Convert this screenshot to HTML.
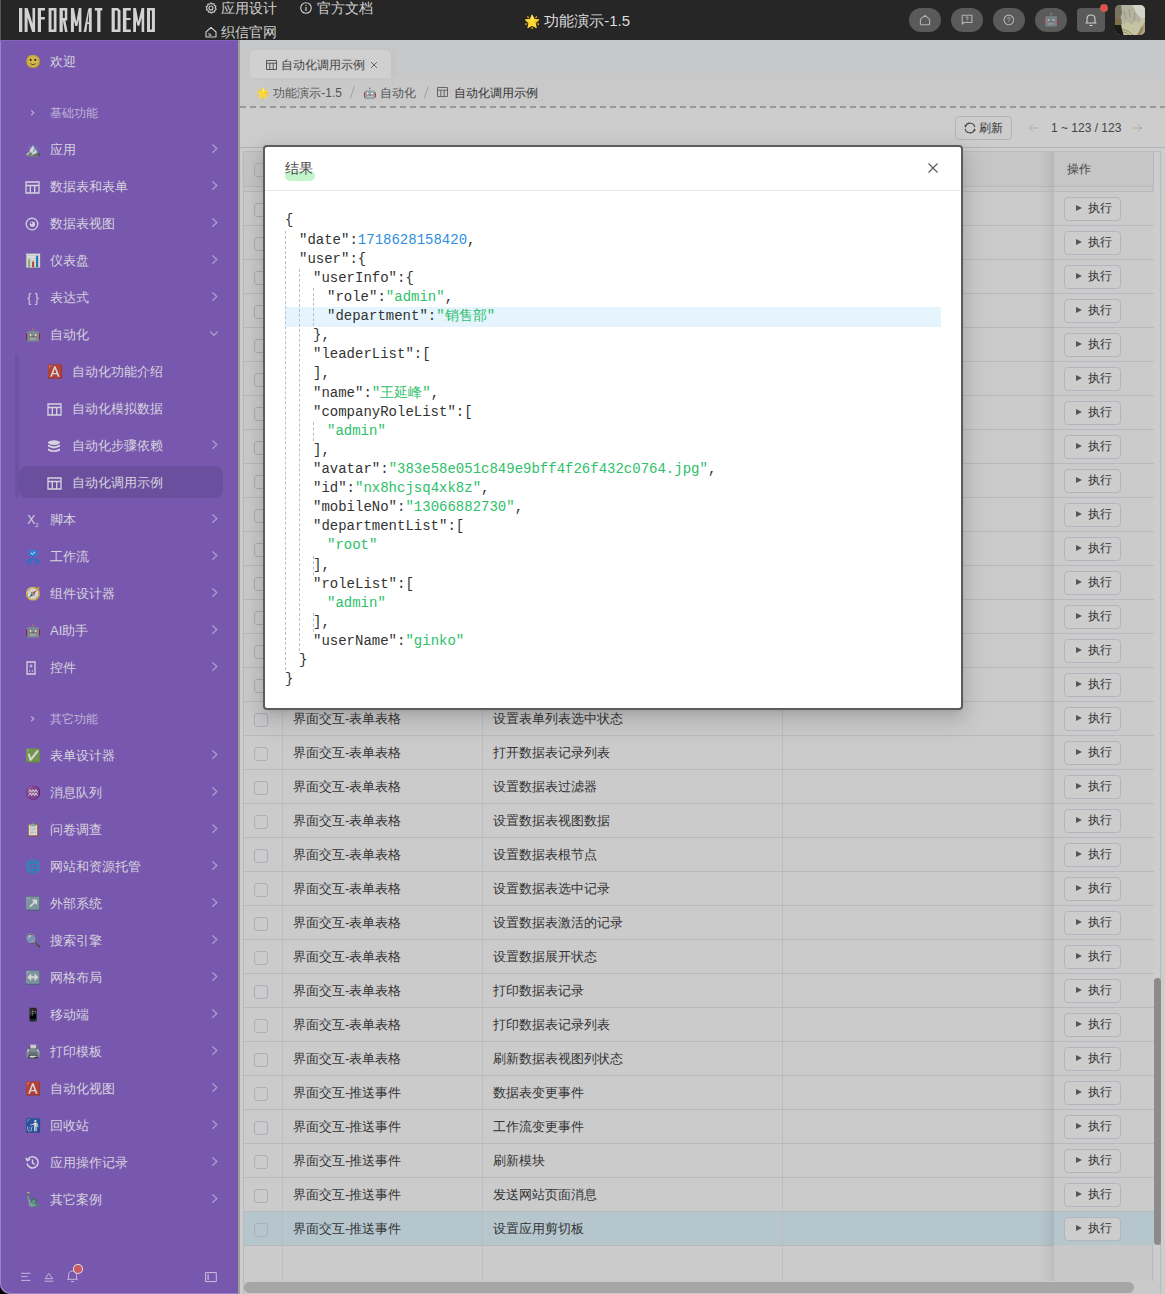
<!DOCTYPE html><html><head><meta charset="utf-8"><style>
*{box-sizing:border-box}
html,body{margin:0;padding:0}
body{width:1165px;height:1294px;overflow:hidden;position:relative;font-family:"Liberation Sans",sans-serif;background:#cdcdcd;color:#333}
.a{position:absolute}
#hdr{position:absolute;left:0;top:0;width:1165px;height:40px;background:#262626;color:#cfcfcf}
.nav{position:absolute;font-size:14px;line-height:16px;white-space:nowrap}
.pill{position:absolute;top:8px;width:32px;height:24px;border-radius:12px;background:#5a5a5a}
#side{position:absolute;left:0;top:40px;width:238px;height:1254px;background:#7758ae;border-bottom-left-radius:10px;box-shadow:inset 1px -1px 0 #9a82c8;color:#d6d3de;overflow:hidden}
#sidebd{position:absolute;left:238px;top:40px;width:2px;height:1254px;background:#9e9e9e}
.mi{position:absolute;left:0;width:238px;height:20px;font-size:13px;line-height:20px;white-space:nowrap}
.mi .ic{position:absolute;top:0;width:16px;height:20px;text-align:center;font-size:13px;line-height:20px}
.mi .tx{position:absolute;top:0}
.mi .ch{position:absolute;left:210.5px;top:4px}.mi svg{display:block}.emo{filter:saturate(.75) brightness(.85)}
.sec{color:#c2b6da}
#main{position:absolute;left:240px;top:40px;width:925px;height:1254px;background:#cdcdcd;overflow:hidden}
.row{position:absolute;left:243px;width:910px;height:34px;border-bottom:1px solid #b9b9bd;font-size:13px;line-height:33px;color:#333}
.cb{position:absolute;left:11px;top:9px;width:16px;height:16px;border:1px solid #b3b3bb;border-radius:3px;background:#cbcbcb}
.c1{position:absolute;left:40px;top:0;width:200px;height:34px;border-left:1px solid #bdbdc1;padding-left:10px}
.c2{position:absolute;left:240px;top:0;width:300px;height:34px;border-left:1px solid #bdbdc1;padding-left:10px}
.c3{position:absolute;left:540px;top:0;width:271px;height:34px;border-left:1px solid #bdbdc1}
.ops{position:absolute;left:811px;top:0;width:99px;height:34px;background:#c9c9c9}
.btn{position:absolute;left:11px;top:6px;width:56px;height:23px;border:1px solid #b5b5bd;border-radius:4px;background:#cbcbcb;font-size:12px;line-height:21px;color:#333;padding-left:10px;white-space:nowrap}
.tri{display:inline-block;width:0;height:0;border-left:6px solid #444;border-top:4px solid transparent;border-bottom:4px solid transparent;margin-right:5px;vertical-align:0px}
#modal{position:absolute;left:263px;top:145px;width:700px;height:565px;background:#fff;border:2px solid #5c5c5c;border-radius:4px;box-shadow:0 6px 16px 0 rgba(0,0,0,.12),0 3px 6px -4px rgba(0,0,0,.16),0 9px 28px 8px rgba(0,0,0,.07)}
.js{font-family:"Liberation Mono",monospace;font-size:14px;line-height:19.12px;color:#333;white-space:pre}
.k{color:#333}.s{color:#2ec06a}.n{color:#2e8ee0}
</style></head><body>
<div id="hdr">
<div class="a" style="left:0;top:0;width:1px;height:40px;background:#565656"></div>
<svg class="a" style="left:0;top:0" width="200" height="40"><path d="M19 8h3.3v24H19Z M24.6 8h3v24h-3Z M24.6 8h3L35.1 32h-3Z M32.5 8h2.6v24h-2.6Z M37.8 8h3.2v24h-3.2Z M37.8 8h7.2v2.6h-7.2Z M37.8 17h7v2.4h-7Z M48.6 8h7.9v24h-7.9Z M51.5 10.6v18.8h2.3V10.6Z M59.5 8h3.3v24h-3.3Z M59.5 8h7.8v2.6h-7.8Z M64.8 8h2.5v12.5h-2.5Z M59.5 18h7.8v2.5h-7.8Z M62.8 20h2.5L67.6 32H65Z M70.9 8h3v24h-3Z M78.8 8h2.6v24h-2.6Z M70.9 8h3L76.3 22 78.8 8h2.6L77.3 26h-2Z M83.6 32L88.4 8 89 10.5 86.3 32Z M88.9 8h2.8v24h-2.8Z M85.6 22.3h3.6v1.7h-3.6Z M94.8 8h7.5v2.4h-7.5Z M97.2 8h3.3v24h-3.3Z M111.6 8H118L120.5 10.5V32h-8.9Z M114.8 10.6V29.4h2.8V11.2L117 10.6Z M122.9 8h3.5v24h-3.5Z M122.9 8h7.9v2.5h-7.9Z M122.9 18h7.6v2.1h-7.6Z M122.9 29.5h7.9V32h-7.9Z M133.2 8h2.8v24h-2.8Z M141.6 8h2.6v24h-2.6Z M133.2 8H136L138.4 21.5 141.6 8h2.6L139.4 25.8h-2Z M147 8h7.9v24H147Z M150 10.6v18.8h1.9V10.6Z" fill="#d2d2d2" fill-rule="nonzero"/></svg>
<div class="nav" style="left:205px;top:0px;padding-left:16px"><svg width="12" height="12" viewBox="0 0 12 12" style="position:absolute;left:0;top:2px"><circle cx="6" cy="6" r="2" fill="none" stroke="#cfcfcf" stroke-width="1.1"/><path d="M6 .8L7.2 2 8.9 1.7 9.3 3.4 10.9 4.1 10.3 5.8 11.2 7.2 9.8 8.2 9.6 10 7.9 9.9 6.6 11.2 5.4 10 3.6 10.3 3.1 8.6 1.4 7.8 2 6.2 1.1 4.8 2.7 3.9 2.9 2.1 4.6 2.2Z" fill="none" stroke="#cfcfcf" stroke-width="1.1" stroke-linejoin="round"/></svg>应用设计</div>
<div class="nav" style="left:300px;top:0px;padding-left:17px"><svg width="12" height="12" viewBox="0 0 12 12" style="position:absolute;left:0;top:2px"><circle cx="6" cy="6" r="5.3" fill="none" stroke="#cfcfcf" stroke-width="1.1"/><path d="M6 5V9 M6 3V3.9" stroke="#cfcfcf" stroke-width="1.2"/></svg>官方文档</div>
<div class="nav" style="left:205px;top:24px;padding-left:16px"><svg width="12" height="12" viewBox="0 0 12 12" style="position:absolute;left:0;top:2px"><path d="M1 6L6 1.3 11 6V11H1Z" fill="none" stroke="#cfcfcf" stroke-width="1.1" stroke-linejoin="round"/><path d="M3.5 7.5Q6 7.5 6 10 M3.5 9Q4.5 9 4.5 10" fill="none" stroke="#cfcfcf" stroke-width="1"/></svg>织信官网</div>
<div class="nav" style="left:524px;top:12px;font-size:15px;line-height:17px;color:#dedede"><span style="font-size:13px">🌟</span> 功能演示-1.5</div>
<div class="pill" style="left:909px"></div>
<div class="pill" style="left:951px"></div>
<div class="pill" style="left:993px"></div>
<div class="pill" style="left:1035px"></div>
<svg class="a" style="left:919px;top:13px" width="12" height="13" viewBox="0 0 12 13"><path d="M1.4 6.3L6 2.3 10.6 6.3V11.2Q10.6 11.8 10 11.8H2Q1.4 11.8 1.4 11.2Z" fill="none" stroke="#b3b3b3" stroke-width="1.1" stroke-linejoin="round"/></svg>
<svg class="a" style="left:961px;top:14px" width="12" height="12" viewBox="0 0 12 12"><path d="M1.2 1.3H10.9V8.5H2.9L1.2 10.2Z" fill="none" stroke="#b3b3b3" stroke-width="1.1" stroke-linejoin="round"/><path d="M4.9 4.1Q5 2.9 6.1 2.9Q7.2 2.9 7.2 3.9Q7.2 4.6 6.1 5.1V5.9 M6.1 6.6V7.4" fill="none" stroke="#b3b3b3" stroke-width="0.9"/></svg>
<svg class="a" style="left:1003px;top:14px" width="12" height="12" viewBox="0 0 12 12"><circle cx="5.8" cy="5.9" r="4.8" fill="none" stroke="#b3b3b3" stroke-width="1.1"/><path d="M4.6 4.9Q4.7 3.6 5.8 3.6Q7 3.6 7 4.7Q7 5.4 5.9 5.9V6.7 M5.9 7.4V8.2" fill="none" stroke="#b3b3b3" stroke-width="0.9"/></svg>
<div class="a" style="left:1043px;top:11px;width:16px;height:18px;font-size:13px;line-height:18px;text-align:center;opacity:.55">🤖</div>
<div class="a" style="left:1077px;top:8px;width:28px;height:24px;border-radius:4px;background:#5a5a5a"></div>
<svg class="a" style="left:1085px;top:13px" width="12" height="14" viewBox="0 0 12 14"><path d="M2 10V6Q2 2 6 2Q10 2 10 6V10H11H1Z" fill="none" stroke="#d0d0d0" stroke-width="1.1" stroke-linejoin="round"/><path d="M4.5 12.5H7.5" stroke="#d0d0d0" stroke-width="1.1"/></svg>
<div class="a" style="left:1100px;top:4px;width:8px;height:8px;border-radius:4px;background:#d9534f"></div>
<svg class="a" style="left:1115px;top:5px" width="30" height="30" viewBox="0 0 30 30"><defs><clipPath id="avc"><rect x="0" y="0" width="30" height="30" rx="5"/></clipPath><filter id="avb" x="-20%" y="-20%" width="140%" height="140%"><feGaussianBlur stdDeviation="0.7"/></filter></defs><g clip-path="url(#avc)"><rect width="30" height="30" fill="#c6c3a2"/><g filter="url(#avb)"><path d="M-2 -2H32V15L27 13 24 18 20 16 17 20 13 17 9 19 6 15 -2 16Z" fill="#b3b3a0"/><path d="M16 -2H32V12L27 14 22 9Z" fill="#d3d3cb"/><path d="M-2 -2H6L7 8 5 14H-2Z" fill="#77755e"/><path d="M-2 13H6L7 19 5 21H-2Z" fill="#7d6d4c"/><path d="M-2 20H6L9 32H-2Z" fill="#1f1d12"/><path d="M22 32L30 16 32 16V32Z" fill="#a99e84"/><path d="M21 32L27 21 28 23 24 32Z" fill="#8f845a"/><path d="M7 24Q13 25 19 31 M8 27Q12 27 15 31" stroke="#8d8a64" stroke-width="0.9" fill="none"/><path d="M9 6L11 14 M14 4L15 12 M20 8L19 16" stroke="#8d8f78" stroke-width="0.8" fill="none"/></g></g></svg>
</div>
<div class="a" style="left:0;top:1270px;width:20px;height:24px;background:#000"></div>
<div id="side">
<div class="a" style="left:0;top:0;width:238px;height:1px;background:#8462bf"></div>
<div class="a" style="left:15px;top:315px;width:4px;height:143px;background:#6e51a3"></div>
<div class="a" style="left:19px;top:426px;width:204px;height:32px;border-radius:8px;background:#6b4f9f"></div>
<div class="mi" style="top:12px">
<span class="ic emo" style="left:25px">🙂</span>
<span class="tx" style="left:50px">欢迎</span>
</div>
<div class="mi sec" style="top:63px"><svg class="a" style="left:30px;top:6px" width="6" height="8" viewBox="0 0 6 8"><path d="M1.2 1.4L3.8 3.8 1.2 6.2" fill="none" stroke="#c4b8dc" stroke-width="1.1"/></svg><span class="tx" style="left:50px;font-size:12px">基础功能</span></div>
<div class="mi" style="top:100px">
<span class="ic emo" style="left:25px">🏔️</span>
<span class="tx" style="left:50px">应用</span>
<span class="ch"><svg width="8" height="10" viewBox="0 0 8 10"><path d="M1.4 .6L5.8 4.6 1.4 8.7" fill="none" stroke="#ab9dcc" stroke-width="1.3"/></svg></span>
</div>
<div class="mi" style="top:137px">
<span class="ic" style="left:25px"><svg width="15" height="13" viewBox="0 0 15 13" style="margin-top:4px"><path d="M1 1H14V12H1Z M1 4.5H14 M5.3 4.5V12 M9.7 4.5V12" fill="none" stroke="#d6d3de" stroke-width="1.3"/></svg></span>
<span class="tx" style="left:50px">数据表和表单</span>
<span class="ch"><svg width="8" height="10" viewBox="0 0 8 10"><path d="M1.4 .6L5.8 4.6 1.4 8.7" fill="none" stroke="#ab9dcc" stroke-width="1.3"/></svg></span>
</div>
<div class="mi" style="top:174px">
<span class="ic" style="left:25px"><svg width="14" height="14" viewBox="0 0 14 14" style="margin-top:3px"><circle cx="7" cy="7" r="5.8" fill="none" stroke="#d6d3de" stroke-width="1.3"/><circle cx="7.4" cy="7.2" r="2.6" fill="#d6d3de"/><circle cx="6.5" cy="6.3" r="1" fill="#7758ae"/></svg></span>
<span class="tx" style="left:50px">数据表视图</span>
<span class="ch"><svg width="8" height="10" viewBox="0 0 8 10"><path d="M1.4 .6L5.8 4.6 1.4 8.7" fill="none" stroke="#ab9dcc" stroke-width="1.3"/></svg></span>
</div>
<div class="mi" style="top:211px">
<span class="ic emo" style="left:25px">📊</span>
<span class="tx" style="left:50px">仪表盘</span>
<span class="ch"><svg width="8" height="10" viewBox="0 0 8 10"><path d="M1.4 .6L5.8 4.6 1.4 8.7" fill="none" stroke="#ab9dcc" stroke-width="1.3"/></svg></span>
</div>
<div class="mi" style="top:248px">
<span class="ic" style="left:25px;font-size:12px">{ }</span>
<span class="tx" style="left:50px">表达式</span>
<span class="ch"><svg width="8" height="10" viewBox="0 0 8 10"><path d="M1.4 .6L5.8 4.6 1.4 8.7" fill="none" stroke="#ab9dcc" stroke-width="1.3"/></svg></span>
</div>
<div class="mi" style="top:285px">
<span class="ic emo" style="left:25px">🤖</span>
<span class="tx" style="left:50px">自动化</span>
<span class="ch" style="left:208px;top:4px"><svg width="12" height="9" viewBox="0 0 12 9"><path d="M2.1 2.4L5.9 6.3 9.8 2.4" fill="none" stroke="#ab9dcc" stroke-width="1.3"/></svg></span>
</div>
<div class="mi" style="top:322px">
<span class="ic emo" style="left:47px">🅰️</span>
<span class="tx" style="left:72px">自动化功能介绍</span>
</div>
<div class="mi" style="top:359px">
<span class="ic" style="left:47px"><svg width="15" height="13" viewBox="0 0 15 13" style="margin-top:4px"><path d="M1 1H14V12H1Z M1 4.5H14 M5.3 4.5V12 M9.7 4.5V12" fill="none" stroke="#d6d3de" stroke-width="1.3"/></svg></span>
<span class="tx" style="left:72px">自动化模拟数据</span>
</div>
<div class="mi" style="top:396px">
<span class="ic" style="left:47px"><svg width="14" height="13" viewBox="0 0 14 13" style="margin-top:4px"><ellipse cx="7" cy="2.6" rx="6" ry="2.3" fill="#d6d3de"/><path d="M1 4.6Q7 8.2 13 4.6V6.6Q7 10.2 1 6.6Z M1 8.6Q7 12.2 13 8.6V10.4Q7 13.8 1 10.4Z" fill="#d6d3de"/></svg></span>
<span class="tx" style="left:72px">自动化步骤依赖</span>
<span class="ch"><svg width="8" height="10" viewBox="0 0 8 10"><path d="M1.4 .6L5.8 4.6 1.4 8.7" fill="none" stroke="#ab9dcc" stroke-width="1.3"/></svg></span>
</div>
<div class="mi" style="top:433px">
<span class="ic" style="left:47px"><svg width="15" height="13" viewBox="0 0 15 13" style="margin-top:4px"><path d="M1 1H14V12H1Z M1 4.5H14 M5.3 4.5V12 M9.7 4.5V12" fill="none" stroke="#d6d3de" stroke-width="1.3"/></svg></span>
<span class="tx" style="left:72px">自动化调用示例</span>
</div>
<div class="mi" style="top:470px">
<span class="ic" style="left:25px;font-size:12px">X<sub style="font-size:6px">2</sub></span>
<span class="tx" style="left:50px">脚本</span>
<span class="ch"><svg width="8" height="10" viewBox="0 0 8 10"><path d="M1.4 .6L5.8 4.6 1.4 8.7" fill="none" stroke="#ab9dcc" stroke-width="1.3"/></svg></span>
</div>
<div class="mi" style="top:507px">
<span class="ic" style="left:25px"><svg width="16" height="16" viewBox="0 0 16 16" style="margin-top:2px"><rect x="4" y="1" width="8" height="6" fill="#2b7fd4"/><path d="M5.8 4L7.4 5.3 10 2.8" stroke="#e8f0ff" stroke-width="1" fill="none"/><path d="M8 7V9M4 12V10H12V12" stroke="#2b6fc4" stroke-width="1.2" fill="none"/><circle cx="4" cy="13" r="2.2" fill="none" stroke="#2b6fc4" stroke-width="1.2"/><circle cx="12" cy="13" r="2.2" fill="none" stroke="#2b6fc4" stroke-width="1.2"/></svg></span>
<span class="tx" style="left:50px">工作流</span>
<span class="ch"><svg width="8" height="10" viewBox="0 0 8 10"><path d="M1.4 .6L5.8 4.6 1.4 8.7" fill="none" stroke="#ab9dcc" stroke-width="1.3"/></svg></span>
</div>
<div class="mi" style="top:544px">
<span class="ic emo" style="left:25px">🧭</span>
<span class="tx" style="left:50px">组件设计器</span>
<span class="ch"><svg width="8" height="10" viewBox="0 0 8 10"><path d="M1.4 .6L5.8 4.6 1.4 8.7" fill="none" stroke="#ab9dcc" stroke-width="1.3"/></svg></span>
</div>
<div class="mi" style="top:581px">
<span class="ic emo" style="left:25px">🤖</span>
<span class="tx" style="left:50px">AI助手</span>
<span class="ch"><svg width="8" height="10" viewBox="0 0 8 10"><path d="M1.4 .6L5.8 4.6 1.4 8.7" fill="none" stroke="#ab9dcc" stroke-width="1.3"/></svg></span>
</div>
<div class="mi" style="top:618px">
<span class="ic" style="left:25px"><svg width="12" height="14" viewBox="0 0 12 14" style="margin-top:3px"><path d="M2 1H10V13H2Z" fill="none" stroke="#d6d3de" stroke-width="1.3"/><path d="M6 3.5V6.5 M4.5 5H7.5" stroke="#d6d3de" stroke-width="1"/><circle cx="4.6" cy="10" r=".7" fill="#d6d3de"/><circle cx="7.4" cy="10" r=".7" fill="#d6d3de"/></svg></span>
<span class="tx" style="left:50px">控件</span>
<span class="ch"><svg width="8" height="10" viewBox="0 0 8 10"><path d="M1.4 .6L5.8 4.6 1.4 8.7" fill="none" stroke="#ab9dcc" stroke-width="1.3"/></svg></span>
</div>
<div class="mi sec" style="top:669px"><svg class="a" style="left:30px;top:6px" width="6" height="8" viewBox="0 0 6 8"><path d="M1.2 1.4L3.8 3.8 1.2 6.2" fill="none" stroke="#c4b8dc" stroke-width="1.1"/></svg><span class="tx" style="left:50px;font-size:12px">其它功能</span></div>
<div class="mi" style="top:706px">
<span class="ic emo" style="left:25px">✅</span>
<span class="tx" style="left:50px">表单设计器</span>
<span class="ch"><svg width="8" height="10" viewBox="0 0 8 10"><path d="M1.4 .6L5.8 4.6 1.4 8.7" fill="none" stroke="#ab9dcc" stroke-width="1.3"/></svg></span>
</div>
<div class="mi" style="top:743px">
<span class="ic emo" style="left:25px">♒</span>
<span class="tx" style="left:50px">消息队列</span>
<span class="ch"><svg width="8" height="10" viewBox="0 0 8 10"><path d="M1.4 .6L5.8 4.6 1.4 8.7" fill="none" stroke="#ab9dcc" stroke-width="1.3"/></svg></span>
</div>
<div class="mi" style="top:780px">
<span class="ic emo" style="left:25px">📋</span>
<span class="tx" style="left:50px">问卷调查</span>
<span class="ch"><svg width="8" height="10" viewBox="0 0 8 10"><path d="M1.4 .6L5.8 4.6 1.4 8.7" fill="none" stroke="#ab9dcc" stroke-width="1.3"/></svg></span>
</div>
<div class="mi" style="top:817px">
<span class="ic emo" style="left:25px">🌐</span>
<span class="tx" style="left:50px">网站和资源托管</span>
<span class="ch"><svg width="8" height="10" viewBox="0 0 8 10"><path d="M1.4 .6L5.8 4.6 1.4 8.7" fill="none" stroke="#ab9dcc" stroke-width="1.3"/></svg></span>
</div>
<div class="mi" style="top:854px">
<span class="ic emo" style="left:25px">↗️</span>
<span class="tx" style="left:50px">外部系统</span>
<span class="ch"><svg width="8" height="10" viewBox="0 0 8 10"><path d="M1.4 .6L5.8 4.6 1.4 8.7" fill="none" stroke="#ab9dcc" stroke-width="1.3"/></svg></span>
</div>
<div class="mi" style="top:891px">
<span class="ic emo" style="left:25px">🔍</span>
<span class="tx" style="left:50px">搜索引擎</span>
<span class="ch"><svg width="8" height="10" viewBox="0 0 8 10"><path d="M1.4 .6L5.8 4.6 1.4 8.7" fill="none" stroke="#ab9dcc" stroke-width="1.3"/></svg></span>
</div>
<div class="mi" style="top:928px">
<span class="ic emo" style="left:25px">↔️</span>
<span class="tx" style="left:50px">网格布局</span>
<span class="ch"><svg width="8" height="10" viewBox="0 0 8 10"><path d="M1.4 .6L5.8 4.6 1.4 8.7" fill="none" stroke="#ab9dcc" stroke-width="1.3"/></svg></span>
</div>
<div class="mi" style="top:965px">
<span class="ic emo" style="left:25px">📱</span>
<span class="tx" style="left:50px">移动端</span>
<span class="ch"><svg width="8" height="10" viewBox="0 0 8 10"><path d="M1.4 .6L5.8 4.6 1.4 8.7" fill="none" stroke="#ab9dcc" stroke-width="1.3"/></svg></span>
</div>
<div class="mi" style="top:1002px">
<span class="ic emo" style="left:25px">🖨️</span>
<span class="tx" style="left:50px">打印模板</span>
<span class="ch"><svg width="8" height="10" viewBox="0 0 8 10"><path d="M1.4 .6L5.8 4.6 1.4 8.7" fill="none" stroke="#ab9dcc" stroke-width="1.3"/></svg></span>
</div>
<div class="mi" style="top:1039px">
<span class="ic emo" style="left:25px">🅰️</span>
<span class="tx" style="left:50px">自动化视图</span>
<span class="ch"><svg width="8" height="10" viewBox="0 0 8 10"><path d="M1.4 .6L5.8 4.6 1.4 8.7" fill="none" stroke="#ab9dcc" stroke-width="1.3"/></svg></span>
</div>
<div class="mi" style="top:1076px">
<span class="ic emo" style="left:25px">🚮</span>
<span class="tx" style="left:50px">回收站</span>
<span class="ch"><svg width="8" height="10" viewBox="0 0 8 10"><path d="M1.4 .6L5.8 4.6 1.4 8.7" fill="none" stroke="#ab9dcc" stroke-width="1.3"/></svg></span>
</div>
<div class="mi" style="top:1113px">
<span class="ic" style="left:25px"><svg width="15" height="15" viewBox="0 0 15 15" style="margin-top:2px"><path d="M2.3 5.2A5.6 5.6 0 1 1 2 8.5" fill="none" stroke="#d6d3de" stroke-width="1.5"/><path d="M.8 2.8L2.3 5.8 5.2 4.2" fill="none" stroke="#d6d3de" stroke-width="1.4"/><path d="M7.5 4.5V7.8L9.8 9.5" fill="none" stroke="#d6d3de" stroke-width="1.4"/></svg></span>
<span class="tx" style="left:50px">应用操作记录</span>
<span class="ch"><svg width="8" height="10" viewBox="0 0 8 10"><path d="M1.4 .6L5.8 4.6 1.4 8.7" fill="none" stroke="#ab9dcc" stroke-width="1.3"/></svg></span>
</div>
<div class="mi" style="top:1150px">
<span class="ic emo" style="left:25px">🗽</span>
<span class="tx" style="left:50px">其它案例</span>
<span class="ch"><svg width="8" height="10" viewBox="0 0 8 10"><path d="M1.4 .6L5.8 4.6 1.4 8.7" fill="none" stroke="#ab9dcc" stroke-width="1.3"/></svg></span>
</div>
<svg class="a" style="left:20px;top:1228px" width="200" height="16" viewBox="0 0 200 16">
<path d="M1.1 5.3H10.5 M1.1 8.6H7.7 M1.1 12.4H10.5" stroke="#c9c0dc" stroke-width="0.9"/>
<path d="M28.9 5.4L32.6 10.7H25.2Z M24.5 13.2H33.5" fill="none" stroke="#c9c0dc" stroke-width="0.9" stroke-linejoin="round"/>
<path d="M48.5 11.3V7.5Q48.5 3 52.5 3Q56.5 3 56.5 7.5V11.3 M47.2 11.3H57.8 M51 13.6H54" fill="none" stroke="#c9c0dc" stroke-width="0.9"/>
<path d="M185.6 4.6H196.3V13.6H185.6Z" fill="none" stroke="#c9c0dc" stroke-width="1"/><path d="M188.1 6.2V11.9" stroke="#c9c0dc" stroke-width="1.2"/>
</svg>
<div class="a" style="left:74px;top:1225px;width:8px;height:8px;border-radius:4px;background:#c95c5c;box-shadow:0 0 0 1px #e8e0e8"></div>
</div>
<div id="sidebd"></div>
<div id="main">
<div class="a" style="left:0;top:0;width:925px;height:38px;background:#c7c8ca"></div>
<div class="a" style="left:0;top:38px;width:925px;height:29px;background:#c9c9c9"></div>
<div class="a" style="left:10px;top:10px;width:141px;height:28px;background:#d0d0d0;border-radius:5px 5px 0 0;box-shadow:3px 0 6px rgba(0,0,0,.03)"></div>
<svg class="a" style="left:26px;top:20px" width="11" height="10" viewBox="0 0 11 10"><path d="M.5 .5H10.5V9.5H.5Z M.5 3.2H10.5 M3.8 3.2V9.5 M7.2 3.2V9.5" fill="none" stroke="#555" stroke-width="1"/></svg>
<div class="a" style="left:41px;top:17px;font-size:12px;line-height:16px;color:#444;white-space:nowrap">自动化调用示例</div>
<svg class="a" style="left:130px;top:21px" width="8" height="8" viewBox="0 0 8 8"><path d="M1 1L7 7M7 1L1 7" stroke="#666" stroke-width="1"/></svg>
<div class="a" style="left:16px;top:45px;font-size:12px;line-height:16px;color:#555;white-space:nowrap"><span style="font-size:11px">🌟</span> 功能演示-1.5</div>
<svg class="a" style="left:108px;top:44px" width="8" height="16"><path d="M2.2 14.7L6.5 2.2" stroke="#9ea2ae" stroke-width="1"/></svg>
<div class="a" style="left:123px;top:45px;font-size:12px;line-height:16px;color:#555;white-space:nowrap"><span style="font-size:11px">🤖</span> 自动化</div>
<svg class="a" style="left:182px;top:44px" width="8" height="16"><path d="M2.2 14.4L6.5 2.4" stroke="#9ea2ae" stroke-width="1"/></svg>
<svg class="a" style="left:197px;top:47px" width="11" height="10" viewBox="0 0 11 10"><path d="M.5 .5H10.5V9.5H.5Z M.5 3.2H10.5 M3.8 3.2V9.5 M7.2 3.2V9.5" fill="none" stroke="#666" stroke-width="1"/></svg>
<div class="a" style="left:214px;top:45px;font-size:12px;line-height:16px;color:#333;white-space:nowrap">自动化调用示例</div>
<div class="a" style="left:0;top:66px;width:925px;height:2px;background:repeating-linear-gradient(90deg,#9a9a9a 0 6px,transparent 6px 10px)"></div>
<div class="a" style="left:715px;top:76px;width:57px;height:24px;border:1px solid #b5b5bd;border-radius:4px;font-size:12px;line-height:22px;color:#333;padding-left:23px;white-space:nowrap">刷新</div>
<svg class="a" style="left:723.5px;top:81.7px" width="12" height="12" viewBox="0 0 12 12"><path d="M1.4 4.2A5 5 0 0 1 10.9 5.2 M10.6 7.8A5 5 0 0 1 1.1 6.8" fill="none" stroke="#444" stroke-width="1.1"/><path d="M0 3.6L2.6 3.2 1.8 5.8Z M12 8.4L9.4 8.8 10.2 6.2Z" fill="#444"/></svg>
<svg class="a" style="left:788px;top:83px" width="11" height="10" viewBox="0 0 11 10"><path d="M10 5H1.5 M5 1.5L1.5 5 5 8.5" fill="none" stroke="#aaa" stroke-width="1"/></svg>
<div class="a" style="left:811px;top:80px;font-size:12px;line-height:16px;color:#444;white-space:nowrap">1 ~ 123 / 123</div>
<svg class="a" style="left:892px;top:83px" width="11" height="10" viewBox="0 0 11 10"><path d="M1 5H9.5 M6 1.5L9.5 5 6 8.5" fill="none" stroke="#aaa" stroke-width="1"/></svg>
<div class="a" style="left:0;top:107px;width:925px;height:1px;background:#b4b4b4"></div>
<div class="a" style="left:3px;top:111px;width:918px;height:1143px;border:1px solid #b9b9c0;border-bottom:none;background:#cbcbcb"></div>
<div class="a" style="left:4px;top:112px;width:910px;height:35px;background:#c6c6c6;border-bottom:1px solid #b9b9bd"></div>
<div class="a" style="left:14px;top:123px;width:14px;height:14px;border:1px solid #adadbb;border-radius:3px"></div>
<div class="a" style="left:4px;top:147px;width:910px;height:5px;background:#c9c9c9;border-bottom:1px solid #b9b9bd"></div>
<div class="a" style="left:4px;top:152px;width:910px;height:34px;background:#cbcbcb;border-bottom:1px solid #b9b9bd"></div>
<div class="a" style="left:14px;top:163px;width:14px;height:14px;border:1px solid #adadbb;border-radius:3px"></div>
<div class="a" style="left:53px;top:161px;font-size:13px;line-height:16px;color:#333;white-space:nowrap">界面交互-表单表格</div>
<div class="a" style="left:253px;top:161px;font-size:13px;line-height:16px;color:#333;white-space:nowrap">打开表单</div>
<div class="a" style="left:4px;top:186px;width:910px;height:34px;background:#cbcbcb;border-bottom:1px solid #b9b9bd"></div>
<div class="a" style="left:14px;top:197px;width:14px;height:14px;border:1px solid #adadbb;border-radius:3px"></div>
<div class="a" style="left:53px;top:195px;font-size:13px;line-height:16px;color:#333;white-space:nowrap">界面交互-表单表格</div>
<div class="a" style="left:253px;top:195px;font-size:13px;line-height:16px;color:#333;white-space:nowrap">关闭表单</div>
<div class="a" style="left:4px;top:220px;width:910px;height:34px;background:#cbcbcb;border-bottom:1px solid #b9b9bd"></div>
<div class="a" style="left:14px;top:231px;width:14px;height:14px;border:1px solid #adadbb;border-radius:3px"></div>
<div class="a" style="left:53px;top:229px;font-size:13px;line-height:16px;color:#333;white-space:nowrap">界面交互-表单表格</div>
<div class="a" style="left:253px;top:229px;font-size:13px;line-height:16px;color:#333;white-space:nowrap">设置表单字段值</div>
<div class="a" style="left:4px;top:254px;width:910px;height:34px;background:#cbcbcb;border-bottom:1px solid #b9b9bd"></div>
<div class="a" style="left:14px;top:265px;width:14px;height:14px;border:1px solid #adadbb;border-radius:3px"></div>
<div class="a" style="left:53px;top:263px;font-size:13px;line-height:16px;color:#333;white-space:nowrap">界面交互-表单表格</div>
<div class="a" style="left:253px;top:263px;font-size:13px;line-height:16px;color:#333;white-space:nowrap">获取表单字段值</div>
<div class="a" style="left:4px;top:288px;width:910px;height:34px;background:#cbcbcb;border-bottom:1px solid #b9b9bd"></div>
<div class="a" style="left:14px;top:299px;width:14px;height:14px;border:1px solid #adadbb;border-radius:3px"></div>
<div class="a" style="left:53px;top:297px;font-size:13px;line-height:16px;color:#333;white-space:nowrap">界面交互-表单表格</div>
<div class="a" style="left:253px;top:297px;font-size:13px;line-height:16px;color:#333;white-space:nowrap">保存表单</div>
<div class="a" style="left:4px;top:322px;width:910px;height:34px;background:#cbcbcb;border-bottom:1px solid #b9b9bd"></div>
<div class="a" style="left:14px;top:333px;width:14px;height:14px;border:1px solid #adadbb;border-radius:3px"></div>
<div class="a" style="left:53px;top:331px;font-size:13px;line-height:16px;color:#333;white-space:nowrap">界面交互-表单表格</div>
<div class="a" style="left:253px;top:331px;font-size:13px;line-height:16px;color:#333;white-space:nowrap">刷新表单</div>
<div class="a" style="left:4px;top:356px;width:910px;height:34px;background:#cbcbcb;border-bottom:1px solid #b9b9bd"></div>
<div class="a" style="left:14px;top:367px;width:14px;height:14px;border:1px solid #adadbb;border-radius:3px"></div>
<div class="a" style="left:53px;top:365px;font-size:13px;line-height:16px;color:#333;white-space:nowrap">界面交互-表单表格</div>
<div class="a" style="left:253px;top:365px;font-size:13px;line-height:16px;color:#333;white-space:nowrap">设置表单只读</div>
<div class="a" style="left:4px;top:390px;width:910px;height:34px;background:#cbcbcb;border-bottom:1px solid #b9b9bd"></div>
<div class="a" style="left:14px;top:401px;width:14px;height:14px;border:1px solid #adadbb;border-radius:3px"></div>
<div class="a" style="left:53px;top:399px;font-size:13px;line-height:16px;color:#333;white-space:nowrap">界面交互-表单表格</div>
<div class="a" style="left:253px;top:399px;font-size:13px;line-height:16px;color:#333;white-space:nowrap">打开数据表</div>
<div class="a" style="left:4px;top:424px;width:910px;height:34px;background:#cbcbcb;border-bottom:1px solid #b9b9bd"></div>
<div class="a" style="left:14px;top:435px;width:14px;height:14px;border:1px solid #adadbb;border-radius:3px"></div>
<div class="a" style="left:53px;top:433px;font-size:13px;line-height:16px;color:#333;white-space:nowrap">界面交互-表单表格</div>
<div class="a" style="left:253px;top:433px;font-size:13px;line-height:16px;color:#333;white-space:nowrap">设置表格列</div>
<div class="a" style="left:4px;top:458px;width:910px;height:34px;background:#cbcbcb;border-bottom:1px solid #b9b9bd"></div>
<div class="a" style="left:14px;top:469px;width:14px;height:14px;border:1px solid #adadbb;border-radius:3px"></div>
<div class="a" style="left:53px;top:467px;font-size:13px;line-height:16px;color:#333;white-space:nowrap">界面交互-表单表格</div>
<div class="a" style="left:253px;top:467px;font-size:13px;line-height:16px;color:#333;white-space:nowrap">刷新表格</div>
<div class="a" style="left:4px;top:492px;width:910px;height:34px;background:#cbcbcb;border-bottom:1px solid #b9b9bd"></div>
<div class="a" style="left:14px;top:503px;width:14px;height:14px;border:1px solid #adadbb;border-radius:3px"></div>
<div class="a" style="left:53px;top:501px;font-size:13px;line-height:16px;color:#333;white-space:nowrap">界面交互-表单表格</div>
<div class="a" style="left:253px;top:501px;font-size:13px;line-height:16px;color:#333;white-space:nowrap">设置表单标题</div>
<div class="a" style="left:4px;top:526px;width:910px;height:34px;background:#cbcbcb;border-bottom:1px solid #b9b9bd"></div>
<div class="a" style="left:14px;top:537px;width:14px;height:14px;border:1px solid #adadbb;border-radius:3px"></div>
<div class="a" style="left:53px;top:535px;font-size:13px;line-height:16px;color:#333;white-space:nowrap">界面交互-表单表格</div>
<div class="a" style="left:253px;top:535px;font-size:13px;line-height:16px;color:#333;white-space:nowrap">打开记录详情</div>
<div class="a" style="left:4px;top:560px;width:910px;height:34px;background:#cbcbcb;border-bottom:1px solid #b9b9bd"></div>
<div class="a" style="left:14px;top:571px;width:14px;height:14px;border:1px solid #adadbb;border-radius:3px"></div>
<div class="a" style="left:53px;top:569px;font-size:13px;line-height:16px;color:#333;white-space:nowrap">界面交互-表单表格</div>
<div class="a" style="left:253px;top:569px;font-size:13px;line-height:16px;color:#333;white-space:nowrap">设置字段可见</div>
<div class="a" style="left:4px;top:594px;width:910px;height:34px;background:#cbcbcb;border-bottom:1px solid #b9b9bd"></div>
<div class="a" style="left:14px;top:605px;width:14px;height:14px;border:1px solid #adadbb;border-radius:3px"></div>
<div class="a" style="left:53px;top:603px;font-size:13px;line-height:16px;color:#333;white-space:nowrap">界面交互-表单表格</div>
<div class="a" style="left:253px;top:603px;font-size:13px;line-height:16px;color:#333;white-space:nowrap">设置字段必填</div>
<div class="a" style="left:4px;top:628px;width:910px;height:34px;background:#cbcbcb;border-bottom:1px solid #b9b9bd"></div>
<div class="a" style="left:14px;top:639px;width:14px;height:14px;border:1px solid #adadbb;border-radius:3px"></div>
<div class="a" style="left:53px;top:637px;font-size:13px;line-height:16px;color:#333;white-space:nowrap">界面交互-表单表格</div>
<div class="a" style="left:253px;top:637px;font-size:13px;line-height:16px;color:#333;white-space:nowrap">设置表单列表数据</div>
<div class="a" style="left:4px;top:662px;width:910px;height:34px;background:#cbcbcb;border-bottom:1px solid #b9b9bd"></div>
<div class="a" style="left:14px;top:673px;width:14px;height:14px;border:1px solid #adadbb;border-radius:3px"></div>
<div class="a" style="left:53px;top:671px;font-size:13px;line-height:16px;color:#333;white-space:nowrap">界面交互-表单表格</div>
<div class="a" style="left:253px;top:671px;font-size:13px;line-height:16px;color:#333;white-space:nowrap">设置表单列表选中状态</div>
<div class="a" style="left:4px;top:696px;width:910px;height:34px;background:#cbcbcb;border-bottom:1px solid #b9b9bd"></div>
<div class="a" style="left:14px;top:707px;width:14px;height:14px;border:1px solid #adadbb;border-radius:3px"></div>
<div class="a" style="left:53px;top:705px;font-size:13px;line-height:16px;color:#333;white-space:nowrap">界面交互-表单表格</div>
<div class="a" style="left:253px;top:705px;font-size:13px;line-height:16px;color:#333;white-space:nowrap">打开数据表记录列表</div>
<div class="a" style="left:4px;top:730px;width:910px;height:34px;background:#cbcbcb;border-bottom:1px solid #b9b9bd"></div>
<div class="a" style="left:14px;top:741px;width:14px;height:14px;border:1px solid #adadbb;border-radius:3px"></div>
<div class="a" style="left:53px;top:739px;font-size:13px;line-height:16px;color:#333;white-space:nowrap">界面交互-表单表格</div>
<div class="a" style="left:253px;top:739px;font-size:13px;line-height:16px;color:#333;white-space:nowrap">设置数据表过滤器</div>
<div class="a" style="left:4px;top:764px;width:910px;height:34px;background:#cbcbcb;border-bottom:1px solid #b9b9bd"></div>
<div class="a" style="left:14px;top:775px;width:14px;height:14px;border:1px solid #adadbb;border-radius:3px"></div>
<div class="a" style="left:53px;top:773px;font-size:13px;line-height:16px;color:#333;white-space:nowrap">界面交互-表单表格</div>
<div class="a" style="left:253px;top:773px;font-size:13px;line-height:16px;color:#333;white-space:nowrap">设置数据表视图数据</div>
<div class="a" style="left:4px;top:798px;width:910px;height:34px;background:#cbcbcb;border-bottom:1px solid #b9b9bd"></div>
<div class="a" style="left:14px;top:809px;width:14px;height:14px;border:1px solid #adadbb;border-radius:3px"></div>
<div class="a" style="left:53px;top:807px;font-size:13px;line-height:16px;color:#333;white-space:nowrap">界面交互-表单表格</div>
<div class="a" style="left:253px;top:807px;font-size:13px;line-height:16px;color:#333;white-space:nowrap">设置数据表根节点</div>
<div class="a" style="left:4px;top:832px;width:910px;height:34px;background:#cbcbcb;border-bottom:1px solid #b9b9bd"></div>
<div class="a" style="left:14px;top:843px;width:14px;height:14px;border:1px solid #adadbb;border-radius:3px"></div>
<div class="a" style="left:53px;top:841px;font-size:13px;line-height:16px;color:#333;white-space:nowrap">界面交互-表单表格</div>
<div class="a" style="left:253px;top:841px;font-size:13px;line-height:16px;color:#333;white-space:nowrap">设置数据表选中记录</div>
<div class="a" style="left:4px;top:866px;width:910px;height:34px;background:#cbcbcb;border-bottom:1px solid #b9b9bd"></div>
<div class="a" style="left:14px;top:877px;width:14px;height:14px;border:1px solid #adadbb;border-radius:3px"></div>
<div class="a" style="left:53px;top:875px;font-size:13px;line-height:16px;color:#333;white-space:nowrap">界面交互-表单表格</div>
<div class="a" style="left:253px;top:875px;font-size:13px;line-height:16px;color:#333;white-space:nowrap">设置数据表激活的记录</div>
<div class="a" style="left:4px;top:900px;width:910px;height:34px;background:#cbcbcb;border-bottom:1px solid #b9b9bd"></div>
<div class="a" style="left:14px;top:911px;width:14px;height:14px;border:1px solid #adadbb;border-radius:3px"></div>
<div class="a" style="left:53px;top:909px;font-size:13px;line-height:16px;color:#333;white-space:nowrap">界面交互-表单表格</div>
<div class="a" style="left:253px;top:909px;font-size:13px;line-height:16px;color:#333;white-space:nowrap">设置数据展开状态</div>
<div class="a" style="left:4px;top:934px;width:910px;height:34px;background:#cbcbcb;border-bottom:1px solid #b9b9bd"></div>
<div class="a" style="left:14px;top:945px;width:14px;height:14px;border:1px solid #adadbb;border-radius:3px"></div>
<div class="a" style="left:53px;top:943px;font-size:13px;line-height:16px;color:#333;white-space:nowrap">界面交互-表单表格</div>
<div class="a" style="left:253px;top:943px;font-size:13px;line-height:16px;color:#333;white-space:nowrap">打印数据表记录</div>
<div class="a" style="left:4px;top:968px;width:910px;height:34px;background:#cbcbcb;border-bottom:1px solid #b9b9bd"></div>
<div class="a" style="left:14px;top:979px;width:14px;height:14px;border:1px solid #adadbb;border-radius:3px"></div>
<div class="a" style="left:53px;top:977px;font-size:13px;line-height:16px;color:#333;white-space:nowrap">界面交互-表单表格</div>
<div class="a" style="left:253px;top:977px;font-size:13px;line-height:16px;color:#333;white-space:nowrap">打印数据表记录列表</div>
<div class="a" style="left:4px;top:1002px;width:910px;height:34px;background:#cbcbcb;border-bottom:1px solid #b9b9bd"></div>
<div class="a" style="left:14px;top:1013px;width:14px;height:14px;border:1px solid #adadbb;border-radius:3px"></div>
<div class="a" style="left:53px;top:1011px;font-size:13px;line-height:16px;color:#333;white-space:nowrap">界面交互-表单表格</div>
<div class="a" style="left:253px;top:1011px;font-size:13px;line-height:16px;color:#333;white-space:nowrap">刷新数据表视图列状态</div>
<div class="a" style="left:4px;top:1036px;width:910px;height:34px;background:#cbcbcb;border-bottom:1px solid #b9b9bd"></div>
<div class="a" style="left:14px;top:1047px;width:14px;height:14px;border:1px solid #adadbb;border-radius:3px"></div>
<div class="a" style="left:53px;top:1045px;font-size:13px;line-height:16px;color:#333;white-space:nowrap">界面交互-推送事件</div>
<div class="a" style="left:253px;top:1045px;font-size:13px;line-height:16px;color:#333;white-space:nowrap">数据表变更事件</div>
<div class="a" style="left:4px;top:1070px;width:910px;height:34px;background:#cbcbcb;border-bottom:1px solid #b9b9bd"></div>
<div class="a" style="left:14px;top:1081px;width:14px;height:14px;border:1px solid #adadbb;border-radius:3px"></div>
<div class="a" style="left:53px;top:1079px;font-size:13px;line-height:16px;color:#333;white-space:nowrap">界面交互-推送事件</div>
<div class="a" style="left:253px;top:1079px;font-size:13px;line-height:16px;color:#333;white-space:nowrap">工作流变更事件</div>
<div class="a" style="left:4px;top:1104px;width:910px;height:34px;background:#cbcbcb;border-bottom:1px solid #b9b9bd"></div>
<div class="a" style="left:14px;top:1115px;width:14px;height:14px;border:1px solid #adadbb;border-radius:3px"></div>
<div class="a" style="left:53px;top:1113px;font-size:13px;line-height:16px;color:#333;white-space:nowrap">界面交互-推送事件</div>
<div class="a" style="left:253px;top:1113px;font-size:13px;line-height:16px;color:#333;white-space:nowrap">刷新模块</div>
<div class="a" style="left:4px;top:1138px;width:910px;height:34px;background:#cbcbcb;border-bottom:1px solid #b9b9bd"></div>
<div class="a" style="left:14px;top:1149px;width:14px;height:14px;border:1px solid #adadbb;border-radius:3px"></div>
<div class="a" style="left:53px;top:1147px;font-size:13px;line-height:16px;color:#333;white-space:nowrap">界面交互-推送事件</div>
<div class="a" style="left:253px;top:1147px;font-size:13px;line-height:16px;color:#333;white-space:nowrap">发送网站页面消息</div>
<div class="a" style="left:4px;top:1172px;width:910px;height:34px;background:#b6c6cd;border-bottom:1px solid #b9b9bd"></div>
<div class="a" style="left:14px;top:1183px;width:14px;height:14px;border:1px solid #adadbb;border-radius:3px"></div>
<div class="a" style="left:53px;top:1181px;font-size:13px;line-height:16px;color:#333;white-space:nowrap">界面交互-推送事件</div>
<div class="a" style="left:253px;top:1181px;font-size:13px;line-height:16px;color:#333;white-space:nowrap">设置应用剪切板</div>
<div class="a" style="left:42px;top:112px;width:1px;height:1129px;background:#bdbdc1"></div>
<div class="a" style="left:242px;top:112px;width:1px;height:1129px;background:#bdbdc1"></div>
<div class="a" style="left:542px;top:112px;width:1px;height:1129px;background:#bdbdc1"></div>
<div class="a" style="left:798px;top:112px;width:16px;height:1129px;background:linear-gradient(90deg,rgba(0,0,0,0),rgba(0,0,0,.035) 60%,rgba(0,0,0,.08))"></div>
<div class="a" style="left:814px;top:112px;width:99px;height:1129px;background:#c9c9c9;border-right:1px solid #b9b9bd"></div>
<div class="a" style="left:814px;top:112px;width:100px;height:35px;background:#c6c6c6;border-bottom:1px solid #b9b9bd;border-right:1px solid #b9b9bd"></div>
<div class="a" style="left:827px;top:121px;font-size:12px;line-height:16px;color:#444">操作</div>
<div class="a" style="left:814px;top:152px;width:99px;height:34px;background:#cbcbcb;border-bottom:1px solid #b9b9bd"></div>
<div class="a" style="left:824px;top:157px;width:57px;height:24px;border:1px solid #b2b4c0;border-radius:4px;background:#cdcdcd"></div>
<div class="a" style="left:836px;top:165px;width:0;height:0;border-left:6px solid #555;border-top:3.5px solid transparent;border-bottom:3.5px solid transparent"></div>
<div class="a" style="left:848px;top:160px;font-size:12px;line-height:16px;color:#333">执行</div>
<div class="a" style="left:814px;top:186px;width:99px;height:34px;background:#cbcbcb;border-bottom:1px solid #b9b9bd"></div>
<div class="a" style="left:824px;top:191px;width:57px;height:24px;border:1px solid #b2b4c0;border-radius:4px;background:#cdcdcd"></div>
<div class="a" style="left:836px;top:199px;width:0;height:0;border-left:6px solid #555;border-top:3.5px solid transparent;border-bottom:3.5px solid transparent"></div>
<div class="a" style="left:848px;top:194px;font-size:12px;line-height:16px;color:#333">执行</div>
<div class="a" style="left:814px;top:220px;width:99px;height:34px;background:#cbcbcb;border-bottom:1px solid #b9b9bd"></div>
<div class="a" style="left:824px;top:225px;width:57px;height:24px;border:1px solid #b2b4c0;border-radius:4px;background:#cdcdcd"></div>
<div class="a" style="left:836px;top:233px;width:0;height:0;border-left:6px solid #555;border-top:3.5px solid transparent;border-bottom:3.5px solid transparent"></div>
<div class="a" style="left:848px;top:228px;font-size:12px;line-height:16px;color:#333">执行</div>
<div class="a" style="left:814px;top:254px;width:99px;height:34px;background:#cbcbcb;border-bottom:1px solid #b9b9bd"></div>
<div class="a" style="left:824px;top:259px;width:57px;height:24px;border:1px solid #b2b4c0;border-radius:4px;background:#cdcdcd"></div>
<div class="a" style="left:836px;top:267px;width:0;height:0;border-left:6px solid #555;border-top:3.5px solid transparent;border-bottom:3.5px solid transparent"></div>
<div class="a" style="left:848px;top:262px;font-size:12px;line-height:16px;color:#333">执行</div>
<div class="a" style="left:814px;top:288px;width:99px;height:34px;background:#cbcbcb;border-bottom:1px solid #b9b9bd"></div>
<div class="a" style="left:824px;top:293px;width:57px;height:24px;border:1px solid #b2b4c0;border-radius:4px;background:#cdcdcd"></div>
<div class="a" style="left:836px;top:301px;width:0;height:0;border-left:6px solid #555;border-top:3.5px solid transparent;border-bottom:3.5px solid transparent"></div>
<div class="a" style="left:848px;top:296px;font-size:12px;line-height:16px;color:#333">执行</div>
<div class="a" style="left:814px;top:322px;width:99px;height:34px;background:#cbcbcb;border-bottom:1px solid #b9b9bd"></div>
<div class="a" style="left:824px;top:327px;width:57px;height:24px;border:1px solid #b2b4c0;border-radius:4px;background:#cdcdcd"></div>
<div class="a" style="left:836px;top:335px;width:0;height:0;border-left:6px solid #555;border-top:3.5px solid transparent;border-bottom:3.5px solid transparent"></div>
<div class="a" style="left:848px;top:330px;font-size:12px;line-height:16px;color:#333">执行</div>
<div class="a" style="left:814px;top:356px;width:99px;height:34px;background:#cbcbcb;border-bottom:1px solid #b9b9bd"></div>
<div class="a" style="left:824px;top:361px;width:57px;height:24px;border:1px solid #b2b4c0;border-radius:4px;background:#cdcdcd"></div>
<div class="a" style="left:836px;top:369px;width:0;height:0;border-left:6px solid #555;border-top:3.5px solid transparent;border-bottom:3.5px solid transparent"></div>
<div class="a" style="left:848px;top:364px;font-size:12px;line-height:16px;color:#333">执行</div>
<div class="a" style="left:814px;top:390px;width:99px;height:34px;background:#cbcbcb;border-bottom:1px solid #b9b9bd"></div>
<div class="a" style="left:824px;top:395px;width:57px;height:24px;border:1px solid #b2b4c0;border-radius:4px;background:#cdcdcd"></div>
<div class="a" style="left:836px;top:403px;width:0;height:0;border-left:6px solid #555;border-top:3.5px solid transparent;border-bottom:3.5px solid transparent"></div>
<div class="a" style="left:848px;top:398px;font-size:12px;line-height:16px;color:#333">执行</div>
<div class="a" style="left:814px;top:424px;width:99px;height:34px;background:#cbcbcb;border-bottom:1px solid #b9b9bd"></div>
<div class="a" style="left:824px;top:429px;width:57px;height:24px;border:1px solid #b2b4c0;border-radius:4px;background:#cdcdcd"></div>
<div class="a" style="left:836px;top:437px;width:0;height:0;border-left:6px solid #555;border-top:3.5px solid transparent;border-bottom:3.5px solid transparent"></div>
<div class="a" style="left:848px;top:432px;font-size:12px;line-height:16px;color:#333">执行</div>
<div class="a" style="left:814px;top:458px;width:99px;height:34px;background:#cbcbcb;border-bottom:1px solid #b9b9bd"></div>
<div class="a" style="left:824px;top:463px;width:57px;height:24px;border:1px solid #b2b4c0;border-radius:4px;background:#cdcdcd"></div>
<div class="a" style="left:836px;top:471px;width:0;height:0;border-left:6px solid #555;border-top:3.5px solid transparent;border-bottom:3.5px solid transparent"></div>
<div class="a" style="left:848px;top:466px;font-size:12px;line-height:16px;color:#333">执行</div>
<div class="a" style="left:814px;top:492px;width:99px;height:34px;background:#cbcbcb;border-bottom:1px solid #b9b9bd"></div>
<div class="a" style="left:824px;top:497px;width:57px;height:24px;border:1px solid #b2b4c0;border-radius:4px;background:#cdcdcd"></div>
<div class="a" style="left:836px;top:505px;width:0;height:0;border-left:6px solid #555;border-top:3.5px solid transparent;border-bottom:3.5px solid transparent"></div>
<div class="a" style="left:848px;top:500px;font-size:12px;line-height:16px;color:#333">执行</div>
<div class="a" style="left:814px;top:526px;width:99px;height:34px;background:#cbcbcb;border-bottom:1px solid #b9b9bd"></div>
<div class="a" style="left:824px;top:531px;width:57px;height:24px;border:1px solid #b2b4c0;border-radius:4px;background:#cdcdcd"></div>
<div class="a" style="left:836px;top:539px;width:0;height:0;border-left:6px solid #555;border-top:3.5px solid transparent;border-bottom:3.5px solid transparent"></div>
<div class="a" style="left:848px;top:534px;font-size:12px;line-height:16px;color:#333">执行</div>
<div class="a" style="left:814px;top:560px;width:99px;height:34px;background:#cbcbcb;border-bottom:1px solid #b9b9bd"></div>
<div class="a" style="left:824px;top:565px;width:57px;height:24px;border:1px solid #b2b4c0;border-radius:4px;background:#cdcdcd"></div>
<div class="a" style="left:836px;top:573px;width:0;height:0;border-left:6px solid #555;border-top:3.5px solid transparent;border-bottom:3.5px solid transparent"></div>
<div class="a" style="left:848px;top:568px;font-size:12px;line-height:16px;color:#333">执行</div>
<div class="a" style="left:814px;top:594px;width:99px;height:34px;background:#cbcbcb;border-bottom:1px solid #b9b9bd"></div>
<div class="a" style="left:824px;top:599px;width:57px;height:24px;border:1px solid #b2b4c0;border-radius:4px;background:#cdcdcd"></div>
<div class="a" style="left:836px;top:607px;width:0;height:0;border-left:6px solid #555;border-top:3.5px solid transparent;border-bottom:3.5px solid transparent"></div>
<div class="a" style="left:848px;top:602px;font-size:12px;line-height:16px;color:#333">执行</div>
<div class="a" style="left:814px;top:628px;width:99px;height:34px;background:#cbcbcb;border-bottom:1px solid #b9b9bd"></div>
<div class="a" style="left:824px;top:633px;width:57px;height:24px;border:1px solid #b2b4c0;border-radius:4px;background:#cdcdcd"></div>
<div class="a" style="left:836px;top:641px;width:0;height:0;border-left:6px solid #555;border-top:3.5px solid transparent;border-bottom:3.5px solid transparent"></div>
<div class="a" style="left:848px;top:636px;font-size:12px;line-height:16px;color:#333">执行</div>
<div class="a" style="left:814px;top:662px;width:99px;height:34px;background:#cbcbcb;border-bottom:1px solid #b9b9bd"></div>
<div class="a" style="left:824px;top:667px;width:57px;height:24px;border:1px solid #b2b4c0;border-radius:4px;background:#cdcdcd"></div>
<div class="a" style="left:836px;top:675px;width:0;height:0;border-left:6px solid #555;border-top:3.5px solid transparent;border-bottom:3.5px solid transparent"></div>
<div class="a" style="left:848px;top:670px;font-size:12px;line-height:16px;color:#333">执行</div>
<div class="a" style="left:814px;top:696px;width:99px;height:34px;background:#cbcbcb;border-bottom:1px solid #b9b9bd"></div>
<div class="a" style="left:824px;top:701px;width:57px;height:24px;border:1px solid #b2b4c0;border-radius:4px;background:#cdcdcd"></div>
<div class="a" style="left:836px;top:709px;width:0;height:0;border-left:6px solid #555;border-top:3.5px solid transparent;border-bottom:3.5px solid transparent"></div>
<div class="a" style="left:848px;top:704px;font-size:12px;line-height:16px;color:#333">执行</div>
<div class="a" style="left:814px;top:730px;width:99px;height:34px;background:#cbcbcb;border-bottom:1px solid #b9b9bd"></div>
<div class="a" style="left:824px;top:735px;width:57px;height:24px;border:1px solid #b2b4c0;border-radius:4px;background:#cdcdcd"></div>
<div class="a" style="left:836px;top:743px;width:0;height:0;border-left:6px solid #555;border-top:3.5px solid transparent;border-bottom:3.5px solid transparent"></div>
<div class="a" style="left:848px;top:738px;font-size:12px;line-height:16px;color:#333">执行</div>
<div class="a" style="left:814px;top:764px;width:99px;height:34px;background:#cbcbcb;border-bottom:1px solid #b9b9bd"></div>
<div class="a" style="left:824px;top:769px;width:57px;height:24px;border:1px solid #b2b4c0;border-radius:4px;background:#cdcdcd"></div>
<div class="a" style="left:836px;top:777px;width:0;height:0;border-left:6px solid #555;border-top:3.5px solid transparent;border-bottom:3.5px solid transparent"></div>
<div class="a" style="left:848px;top:772px;font-size:12px;line-height:16px;color:#333">执行</div>
<div class="a" style="left:814px;top:798px;width:99px;height:34px;background:#cbcbcb;border-bottom:1px solid #b9b9bd"></div>
<div class="a" style="left:824px;top:803px;width:57px;height:24px;border:1px solid #b2b4c0;border-radius:4px;background:#cdcdcd"></div>
<div class="a" style="left:836px;top:811px;width:0;height:0;border-left:6px solid #555;border-top:3.5px solid transparent;border-bottom:3.5px solid transparent"></div>
<div class="a" style="left:848px;top:806px;font-size:12px;line-height:16px;color:#333">执行</div>
<div class="a" style="left:814px;top:832px;width:99px;height:34px;background:#cbcbcb;border-bottom:1px solid #b9b9bd"></div>
<div class="a" style="left:824px;top:837px;width:57px;height:24px;border:1px solid #b2b4c0;border-radius:4px;background:#cdcdcd"></div>
<div class="a" style="left:836px;top:845px;width:0;height:0;border-left:6px solid #555;border-top:3.5px solid transparent;border-bottom:3.5px solid transparent"></div>
<div class="a" style="left:848px;top:840px;font-size:12px;line-height:16px;color:#333">执行</div>
<div class="a" style="left:814px;top:866px;width:99px;height:34px;background:#cbcbcb;border-bottom:1px solid #b9b9bd"></div>
<div class="a" style="left:824px;top:871px;width:57px;height:24px;border:1px solid #b2b4c0;border-radius:4px;background:#cdcdcd"></div>
<div class="a" style="left:836px;top:879px;width:0;height:0;border-left:6px solid #555;border-top:3.5px solid transparent;border-bottom:3.5px solid transparent"></div>
<div class="a" style="left:848px;top:874px;font-size:12px;line-height:16px;color:#333">执行</div>
<div class="a" style="left:814px;top:900px;width:99px;height:34px;background:#cbcbcb;border-bottom:1px solid #b9b9bd"></div>
<div class="a" style="left:824px;top:905px;width:57px;height:24px;border:1px solid #b2b4c0;border-radius:4px;background:#cdcdcd"></div>
<div class="a" style="left:836px;top:913px;width:0;height:0;border-left:6px solid #555;border-top:3.5px solid transparent;border-bottom:3.5px solid transparent"></div>
<div class="a" style="left:848px;top:908px;font-size:12px;line-height:16px;color:#333">执行</div>
<div class="a" style="left:814px;top:934px;width:99px;height:34px;background:#cbcbcb;border-bottom:1px solid #b9b9bd"></div>
<div class="a" style="left:824px;top:939px;width:57px;height:24px;border:1px solid #b2b4c0;border-radius:4px;background:#cdcdcd"></div>
<div class="a" style="left:836px;top:947px;width:0;height:0;border-left:6px solid #555;border-top:3.5px solid transparent;border-bottom:3.5px solid transparent"></div>
<div class="a" style="left:848px;top:942px;font-size:12px;line-height:16px;color:#333">执行</div>
<div class="a" style="left:814px;top:968px;width:99px;height:34px;background:#cbcbcb;border-bottom:1px solid #b9b9bd"></div>
<div class="a" style="left:824px;top:973px;width:57px;height:24px;border:1px solid #b2b4c0;border-radius:4px;background:#cdcdcd"></div>
<div class="a" style="left:836px;top:981px;width:0;height:0;border-left:6px solid #555;border-top:3.5px solid transparent;border-bottom:3.5px solid transparent"></div>
<div class="a" style="left:848px;top:976px;font-size:12px;line-height:16px;color:#333">执行</div>
<div class="a" style="left:814px;top:1002px;width:99px;height:34px;background:#cbcbcb;border-bottom:1px solid #b9b9bd"></div>
<div class="a" style="left:824px;top:1007px;width:57px;height:24px;border:1px solid #b2b4c0;border-radius:4px;background:#cdcdcd"></div>
<div class="a" style="left:836px;top:1015px;width:0;height:0;border-left:6px solid #555;border-top:3.5px solid transparent;border-bottom:3.5px solid transparent"></div>
<div class="a" style="left:848px;top:1010px;font-size:12px;line-height:16px;color:#333">执行</div>
<div class="a" style="left:814px;top:1036px;width:99px;height:34px;background:#cbcbcb;border-bottom:1px solid #b9b9bd"></div>
<div class="a" style="left:824px;top:1041px;width:57px;height:24px;border:1px solid #b2b4c0;border-radius:4px;background:#cdcdcd"></div>
<div class="a" style="left:836px;top:1049px;width:0;height:0;border-left:6px solid #555;border-top:3.5px solid transparent;border-bottom:3.5px solid transparent"></div>
<div class="a" style="left:848px;top:1044px;font-size:12px;line-height:16px;color:#333">执行</div>
<div class="a" style="left:814px;top:1070px;width:99px;height:34px;background:#cbcbcb;border-bottom:1px solid #b9b9bd"></div>
<div class="a" style="left:824px;top:1075px;width:57px;height:24px;border:1px solid #b2b4c0;border-radius:4px;background:#cdcdcd"></div>
<div class="a" style="left:836px;top:1083px;width:0;height:0;border-left:6px solid #555;border-top:3.5px solid transparent;border-bottom:3.5px solid transparent"></div>
<div class="a" style="left:848px;top:1078px;font-size:12px;line-height:16px;color:#333">执行</div>
<div class="a" style="left:814px;top:1104px;width:99px;height:34px;background:#cbcbcb;border-bottom:1px solid #b9b9bd"></div>
<div class="a" style="left:824px;top:1109px;width:57px;height:24px;border:1px solid #b2b4c0;border-radius:4px;background:#cdcdcd"></div>
<div class="a" style="left:836px;top:1117px;width:0;height:0;border-left:6px solid #555;border-top:3.5px solid transparent;border-bottom:3.5px solid transparent"></div>
<div class="a" style="left:848px;top:1112px;font-size:12px;line-height:16px;color:#333">执行</div>
<div class="a" style="left:814px;top:1138px;width:99px;height:34px;background:#cbcbcb;border-bottom:1px solid #b9b9bd"></div>
<div class="a" style="left:824px;top:1143px;width:57px;height:24px;border:1px solid #b2b4c0;border-radius:4px;background:#cdcdcd"></div>
<div class="a" style="left:836px;top:1151px;width:0;height:0;border-left:6px solid #555;border-top:3.5px solid transparent;border-bottom:3.5px solid transparent"></div>
<div class="a" style="left:848px;top:1146px;font-size:12px;line-height:16px;color:#333">执行</div>
<div class="a" style="left:814px;top:1172px;width:99px;height:34px;background:#b6c6cd;border-bottom:1px solid #b9b9bd"></div>
<div class="a" style="left:824px;top:1177px;width:57px;height:24px;border:1px solid #b2b4c0;border-radius:4px;background:#cdcdcd"></div>
<div class="a" style="left:836px;top:1185px;width:0;height:0;border-left:6px solid #555;border-top:3.5px solid transparent;border-bottom:3.5px solid transparent"></div>
<div class="a" style="left:848px;top:1180px;font-size:12px;line-height:16px;color:#333">执行</div>
<div class="a" style="left:814px;top:1205px;width:99px;height:36px;background:#c8c8c8;border-right:1px solid #b9b9bd"></div>
<div class="a" style="left:914px;top:112px;width:6px;height:1129px;background:#cdcdcd"></div>
<div class="a" style="left:4px;top:151px;width:910px;height:1px;background:#b9b9bd"></div>
<div class="a" style="left:914px;top:938px;width:7px;height:267px;border-radius:4px;background:#8b8b8b"></div>
<div class="a" style="left:4px;top:1241px;width:916px;height:13px;background:#cacaca"></div>
<div class="a" style="left:4px;top:1242px;width:890px;height:11px;border-radius:6px;background:#a6a6a6"></div>
</div>
<div id="modal">
<div class="a" style="left:20px;top:24px;width:30px;height:10px;border-radius:5px;background:#c4f4cc"></div>
<div class="a" style="left:20px;top:13px;font-size:14px;line-height:16px;color:#4a4a4a">结果</div>
<svg class="a" style="left:662.5px;top:16.3px" width="10" height="10" viewBox="0 0 10 10"><path d="M.5 .5L9.5 9.5M9.5 .5L.5 9.5" stroke="#555" stroke-width="1.1"/></svg>
<div class="a" style="left:0;top:43px;width:695px;height:1px;background:#e8e8e8"></div>
<div class="a" style="left:20px;top:159.52px;width:656px;height:20px;background:#e6f5fd"></div>
<div class="a" style="left:19.5px;top:83.54px;width:0;height:439.76px;border-left:1px dashed #b3bfd6"></div>
<div class="a" style="left:33.5px;top:121.78px;width:0;height:382.40px;border-left:1px dashed #b3bfd6"></div>
<div class="a" style="left:47.5px;top:140.90px;width:0;height:38.24px;border-left:1px dashed #b3bfd6"></div>
<div class="a" style="left:47.5px;top:274.74px;width:0;height:19.12px;border-left:1px dashed #b3bfd6"></div>
<div class="a" style="left:47.5px;top:408.58px;width:0;height:19.12px;border-left:1px dashed #b3bfd6"></div>
<div class="a" style="left:47.5px;top:465.94px;width:0;height:19.12px;border-left:1px dashed #b3bfd6"></div>
<div class="a js" style="left:20.0px;top:64.42px">{</div>
<div class="a js" style="left:34.0px;top:83.54px"><span class="k">"date"</span>:<span class="n">1718628158420</span>,</div>
<div class="a js" style="left:34.0px;top:102.66px"><span class="k">"user"</span>:{</div>
<div class="a js" style="left:48.0px;top:121.78px"><span class="k">"userInfo"</span>:{</div>
<div class="a js" style="left:62.0px;top:140.90px"><span class="k">"role"</span>:<span class="s">"admin"</span>,</div>
<div class="a js" style="left:62.0px;top:160.02px"><span class="k">"department"</span>:<span class="s">"销售部"</span></div>
<div class="a js" style="left:48.0px;top:179.14px">},</div>
<div class="a js" style="left:48.0px;top:198.26px"><span class="k">"leaderList"</span>:[</div>
<div class="a js" style="left:48.0px;top:217.38px">],</div>
<div class="a js" style="left:48.0px;top:236.50px"><span class="k">"name"</span>:<span class="s">"王延峰"</span>,</div>
<div class="a js" style="left:48.0px;top:255.62px"><span class="k">"companyRoleList"</span>:[</div>
<div class="a js" style="left:62.0px;top:274.74px"><span class="s">"admin"</span></div>
<div class="a js" style="left:48.0px;top:293.86px">],</div>
<div class="a js" style="left:48.0px;top:312.98px"><span class="k">"avatar"</span>:<span class="s">"383e58e051c849e9bff4f26f432c0764.jpg"</span>,</div>
<div class="a js" style="left:48.0px;top:332.10px"><span class="k">"id"</span>:<span class="s">"nx8hcjsq4xk8z"</span>,</div>
<div class="a js" style="left:48.0px;top:351.22px"><span class="k">"mobileNo"</span>:<span class="s">"13066882730"</span>,</div>
<div class="a js" style="left:48.0px;top:370.34px"><span class="k">"departmentList"</span>:[</div>
<div class="a js" style="left:62.0px;top:389.46px"><span class="s">"root"</span></div>
<div class="a js" style="left:48.0px;top:408.58px">],</div>
<div class="a js" style="left:48.0px;top:427.70px"><span class="k">"roleList"</span>:[</div>
<div class="a js" style="left:62.0px;top:446.82px"><span class="s">"admin"</span></div>
<div class="a js" style="left:48.0px;top:465.94px">],</div>
<div class="a js" style="left:48.0px;top:485.06px"><span class="k">"userName"</span>:<span class="s">"ginko"</span></div>
<div class="a js" style="left:34.0px;top:504.18px">}</div>
<div class="a js" style="left:20.0px;top:523.30px">}</div>
</div>
</body></html>
